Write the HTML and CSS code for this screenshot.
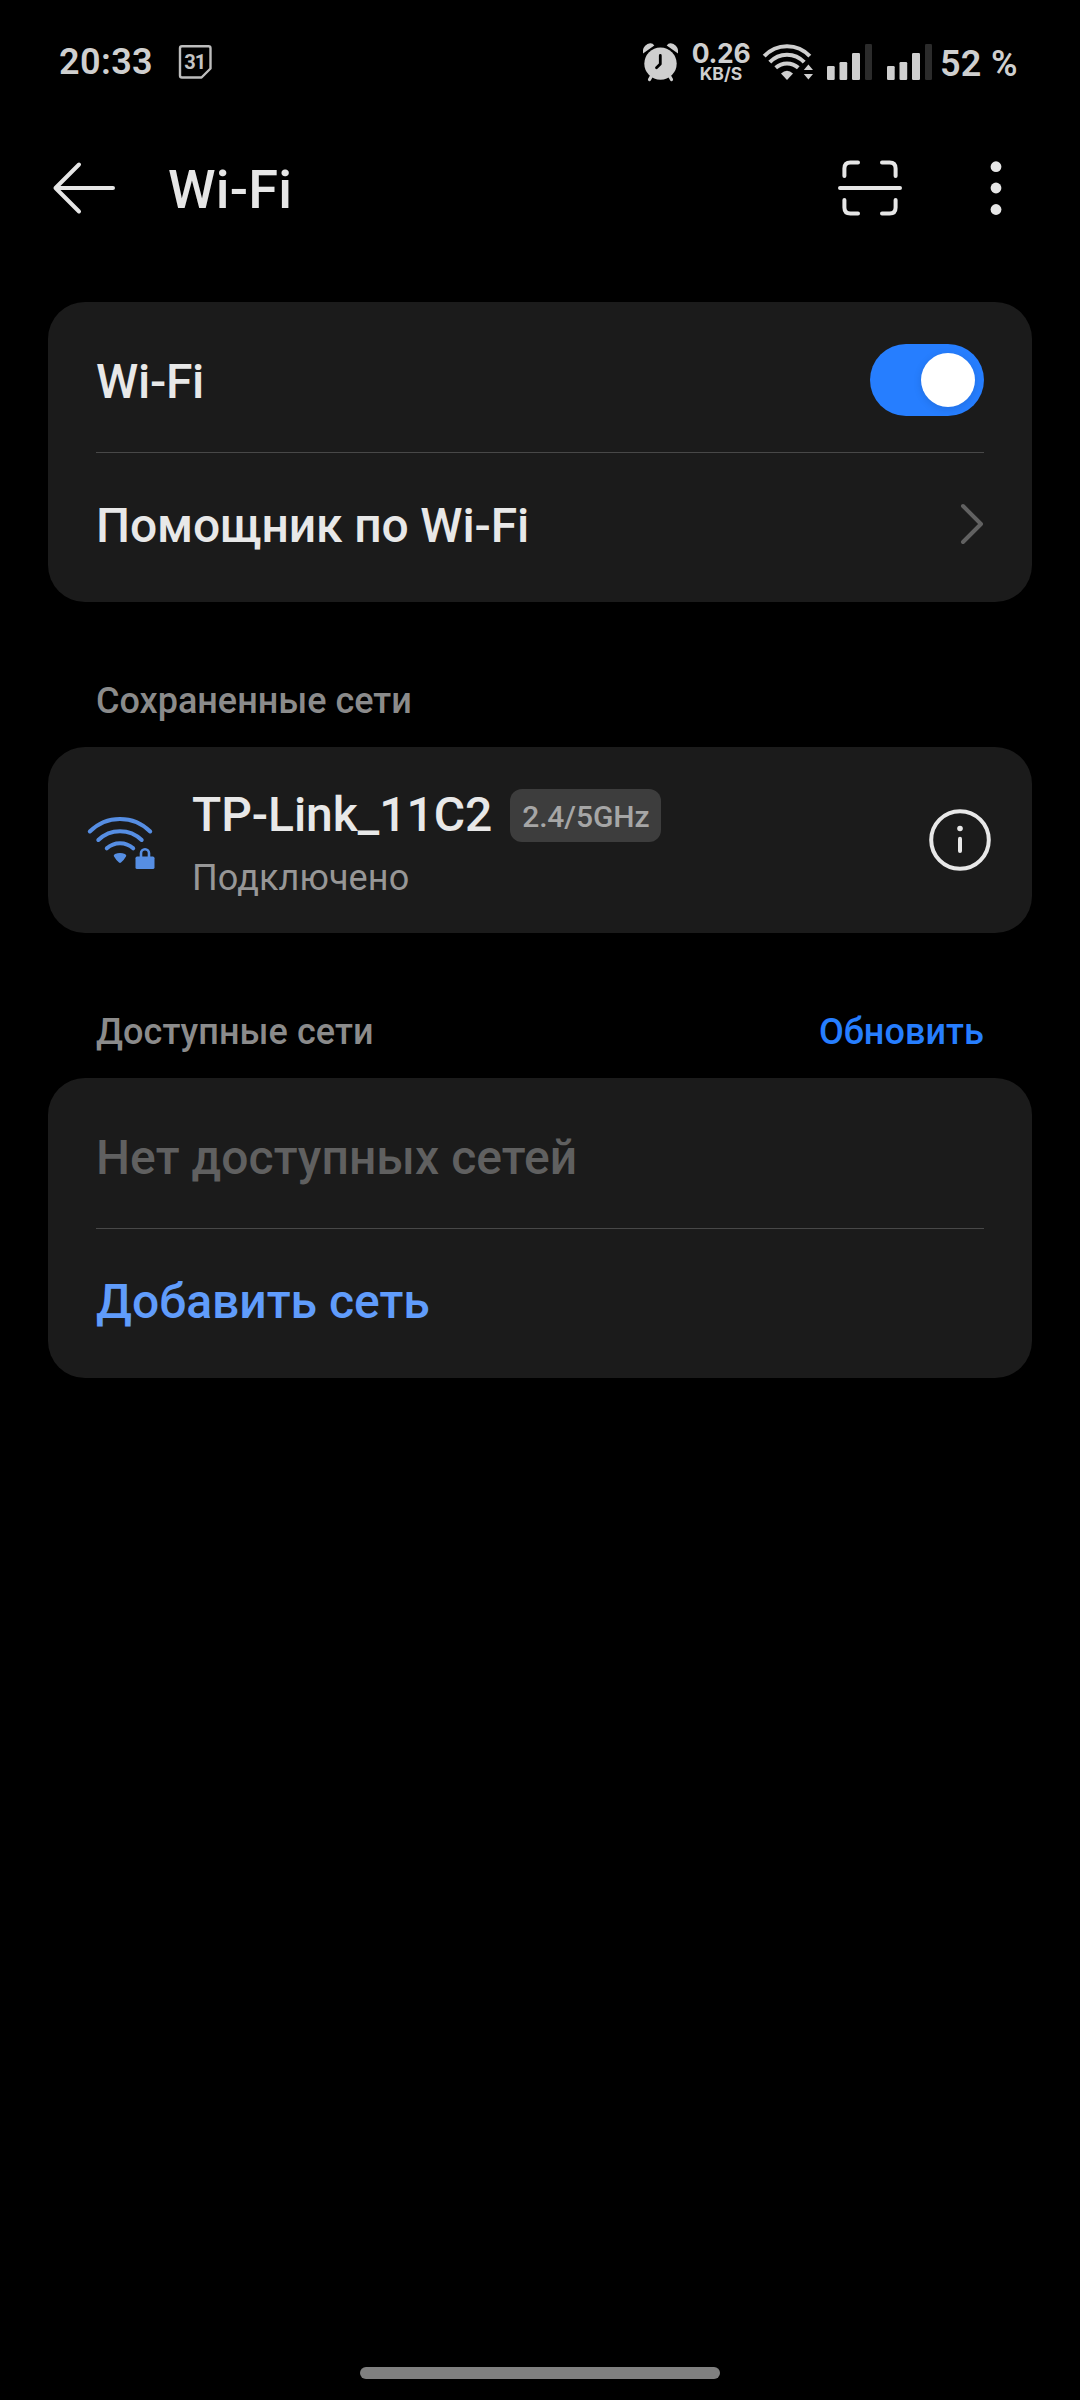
FILE: index.html
```html
<!DOCTYPE html>
<html lang="ru">
<head>
<meta charset="utf-8">
<title>Wi-Fi</title>
<link rel="stylesheet" href="styles.css">
</head>
<body>
<div class="screen">
  <div class="status-bar">
    <span class="clock">20:33</span>
    <svg class="calendar" width="36" height="44" viewBox="177 40 36 44">
      <path d="M182 46.2H208.500Q210.500 46.200 210.500 48.200V68.500L201.500 77.500H182Q180 77.500 180 75.500V48.200Q180 46.200 182 46.200Z" fill="none" stroke="#bdbdbd" stroke-width="2.400" stroke-linejoin="round"/>
      <text x="194.800" y="69" text-anchor="middle" class="calendar-day">31</text>
    </svg>
    <div class="status-right">
      <svg class="alarm" width="40" height="44" viewBox="640 40 40 44">
        <g fill="#cfcfcf">
          <path d="M643 53.500Q642 47 647.500 44Q652 41.800 654.300 45.500Z"/>
          <path d="M678 53.500Q679 47 673.500 44Q669 41.800 666.700 45.500Z"/>
          <circle cx="660.500" cy="63.600" r="16.200"/>
        </g>
        <path d="M651.500 76L649.500 79.500M669.500 76L671.500 79.500" stroke="#cfcfcf" stroke-width="3.200" stroke-linecap="round"/>
        <path d="M660.300 55.500V64L656.500 67.800" fill="none" stroke="#000" stroke-width="2.800" stroke-linecap="round" stroke-linejoin="round"/>
      </svg>
      <div class="speed"><span class="speed-value">0.26</span><span class="speed-unit">KB/S</span></div>
      <svg class="status-wifi" width="54" height="44" viewBox="761 40 54 44">
        <g fill="none" stroke="#cfcfcf" stroke-width="4">
          <path d="M764.200 56.200A31 31 0 0 1 809.800 56.200"/>
          <path d="M769.800 62.200A23.400 23.400 0 0 1 804.200 62.200"/>
          <path d="M775.700 67.800A17 17 0 0 1 798.300 67.800"/>
        </g>
        <path d="M781 73.500Q787 68 793 73.500L787 80Z" fill="#cfcfcf"/>
        <path d="M808.400 64.500L813 70H803.800ZM808.400 79.500L803.800 74H813Z" fill="#cfcfcf"/>
      </svg>
      <svg class="signal" width="46" height="44" viewBox="826 40 46 44">
        <g fill="#cfcfcf"><rect x="827" y="66" width="7.700" height="14" rx="1.200"/><rect x="839.500" y="62" width="7.700" height="18" rx="1.200"/><rect x="852" y="53" width="8" height="27" rx="1.200"/></g>
        <rect x="865" y="44" width="7" height="36" rx="1.200" fill="#2b2b2b"/>
      </svg>
      <svg class="signal second" width="46" height="44" viewBox="826 40 46 44">
        <g fill="#cfcfcf"><rect x="827" y="66" width="7.700" height="14" rx="1.200"/><rect x="839.500" y="62" width="7.700" height="18" rx="1.200"/><rect x="852" y="53" width="8" height="27" rx="1.200"/></g>
        <rect x="865" y="44" width="7" height="36" rx="1.200" fill="#2b2b2b"/>
      </svg>
      <span class="battery">52 %</span>
    </div>
  </div>

  <header class="app-bar">
    <svg class="back" width="68" height="60" viewBox="50 158 68 60" fill="none" stroke="#e6e6e6" stroke-width="4" stroke-linecap="round" stroke-linejoin="round"><path d="M113 188H55.500M79 164.500L55.500 188L79 211.500"/></svg>
    <h1 class="title">Wi-Fi</h1>
    <svg class="scan" width="66" height="60" viewBox="837 158 66 60" fill="none" stroke="#e6e6e6" stroke-width="4" stroke-linecap="round"><path d="M844.400 176V168.500Q844.400 162.500 850.400 162.500H858M882 162.500H889.600Q895.600 162.500 895.600 168.500V176M895.600 200V207.500Q895.600 213.500 889.600 213.500H882M858 213.500H850.400Q844.400 213.500 844.400 207.500V200M840 188H900"/></svg>
    <svg class="more" width="16" height="60" viewBox="988 158 16 60" fill="#e6e6e6"><circle cx="996" cy="166.700" r="5.400"/><circle cx="996" cy="188" r="5.400"/><circle cx="996" cy="209.500" r="5.400"/></svg>
  </header>

  <main class="content">
    <section class="card">
      <div class="row"><span class="label latin">Wi-Fi</span><span class="toggle"><span class="knob"></span></span></div>
      <div class="row divided"><span class="label assistant">Помощник по Wi-Fi</span>
        <svg class="chevron" width="26" height="44" viewBox="959 502 26 44" fill="none" stroke="#616161" stroke-width="4" stroke-linecap="round" stroke-linejoin="round"><path d="M963 506L981 524L963 542"/></svg>
      </div>
    </section>

    <div class="section-head"><h2>Сохраненные сети</h2></div>
    <section class="card network">
      <svg class="wifi-lock" width="70" height="56" viewBox="86 815 70 56">
        <g fill="none" stroke="#568ee3" stroke-width="4" stroke-linecap="round">
          <path d="M89.800 831.500A42.500 42.500 0 0 1 150.200 831.500"/>
          <path d="M98.300 840A31 31 0 0 1 141.700 840"/>
          <path d="M106.800 848.300A19.500 19.500 0 0 1 133.200 848.300"/>
        </g>
        <path d="M114 856.500Q113 855 115 854Q120 852 125 854Q127 855 126 856.500Q124 860 121 862.500Q120 863.300 119 862.500Q116 860 114 856.500Z" fill="#568ee3"/>
        <path d="M141 858V853.200A4 4 0 0 1 149 853.200V858" fill="none" stroke="#568ee3" stroke-width="2.600"/>
        <rect x="135.500" y="856.600" width="19" height="12.400" rx="1.600" fill="#568ee3"/>
      </svg>
      <div class="network-info">
        <div class="network-line"><span class="ssid">TP-Link_11C2</span><span class="badge">2.4/5GHz</span></div>
        <div class="network-state">Подключено</div>
      </div>
      <svg class="info" width="64" height="64" viewBox="928 808 64 64"><circle cx="960" cy="840" r="28.800" fill="none" stroke="#e8e8e8" stroke-width="4"/><circle cx="960" cy="828.500" r="2.800" fill="#e8e8e8"/><path d="M960 838.700V851" stroke="#e8e8e8" stroke-width="4" stroke-linecap="round"/></svg>
    </section>

    <div class="section-head"><h2 class="available">Доступные сети</h2><span class="refresh">Обновить</span></div>
    <section class="card">
      <div class="row"><span class="label muted">Нет доступных сетей</span></div>
      <div class="row divided"><span class="label action">Добавить сеть</span></div>
    </section>
  </main>

  <div class="home-bar"></div>
</div>
</body>
</html>
```
FILE: styles.css
```css
* { box-sizing: border-box; }
body { margin: 0; background: #000; }
svg { display: block; flex: none; }
.screen {
  width: 1080px;
  height: 2400px;
  display: flex;
  flex-direction: column;
  background: #000;
  color: #e8e8e8;
  font-family: Roboto, "Noto Sans", sans-serif;
  font-weight: 500;
  white-space: nowrap;
  overflow: hidden;
}
.status-bar {
  height: 140px;
  padding: 40px 0 0 59px;
  display: flex;
  align-items: flex-start;
  color: #cfcfcf;
}
.clock { width: 118px; font-size: 36px; line-height: 44px; font-weight: 600; letter-spacing: 0.4px; }
.calendar-day { font: 700 20px Roboto, sans-serif; letter-spacing: -1px; fill: #c4c4c4; }
.status-right { display: flex; flex: 1; margin-left: 427px; }
.speed { width: 81px; display: flex; flex-direction: column; align-items: center; padding: 3px 0 0 1px; font-family: Inter, sans-serif; font-weight: 700; }
.speed-value { font-size: 26.5px; line-height: 21px; letter-spacing: -0.3px; }
.speed-unit { font-size: 17.5px; line-height: 20px; }
.signal { margin-left: 11px; }
.signal.second { margin-left: 14px; }
.battery { margin-left: 8px; font-size: 36px; line-height: 48px; font-weight: 600; letter-spacing: 0.3px; }

.app-bar { height: 162px; padding: 18px 76px 0 50px; display: flex; align-items: flex-start; }
.title { flex: 1; margin: 0 0 0 50px; font-size: 54px; line-height: 63px; font-weight: 500; letter-spacing: 0.2px; color: #e6e6e6; }
.more { margin-left: 85px; }

.content { padding: 0 48px; }
.card { padding: 6px 48px; border-radius: 37px; background: #1b1b1b; }
.row { height: 144px; display: flex; align-items: center; justify-content: space-between; }
.row.divided { box-shadow: 0 -1px 0 #1b1b1b, inset 0 1px 0 #484848; }
.label { font-size: 48px; line-height: 60px; padding-top: 3px; }
.latin { letter-spacing: -0.3px; }
.assistant { letter-spacing: -0.15px; }
.label.muted { color: #606060; letter-spacing: 0.06px; }
.label.action { color: #609cfb; }
.chevron { margin-right: -1px; }
.toggle { width: 114px; height: 72px; padding: 9px; border-radius: 36px; background: #267eff; display: flex; justify-content: flex-end; }
.knob { width: 54px; height: 54px; border-radius: 50%; background: #fff; box-shadow: 0 2px 8px rgba(0, 0, 0, 0.12); }

.section-head { height: 145px; padding: 77px 48px 0; display: flex; justify-content: space-between; font-size: 36px; line-height: 44px; }
.section-head h2 { margin: 0; font-size: inherit; font-weight: 500; color: #8b8b8b; }
.available, .refresh { letter-spacing: 0.08px; }
.refresh { color: #267eff; }

.network { height: 186px; padding: 0 40px 0 38px; display: flex; align-items: center; }
.wifi-lock { margin-top: 6px; }
.network-info { flex: 1; margin: 4px 0 0 36px; }
.network-line { height: 60px; display: flex; align-items: center; gap: 18px; }
.ssid { font-size: 48px; line-height: 60px; letter-spacing: -0.05px; }
.badge { height: 53px; padding: 0 12px; border-radius: 12px; background: #3d3d3d; color: #a6a6a6; font-size: 30px; line-height: 55px; letter-spacing: -0.1px; }
.network-state { font-size: 36px; line-height: 44px; font-weight: 400; color: #979797; padding-top: 11px; height: 54px; letter-spacing: 0.1px; }

.home-bar { width: 360px; height: 12px; margin: auto auto 21px; border-radius: 6px; background: #808080; }
```
